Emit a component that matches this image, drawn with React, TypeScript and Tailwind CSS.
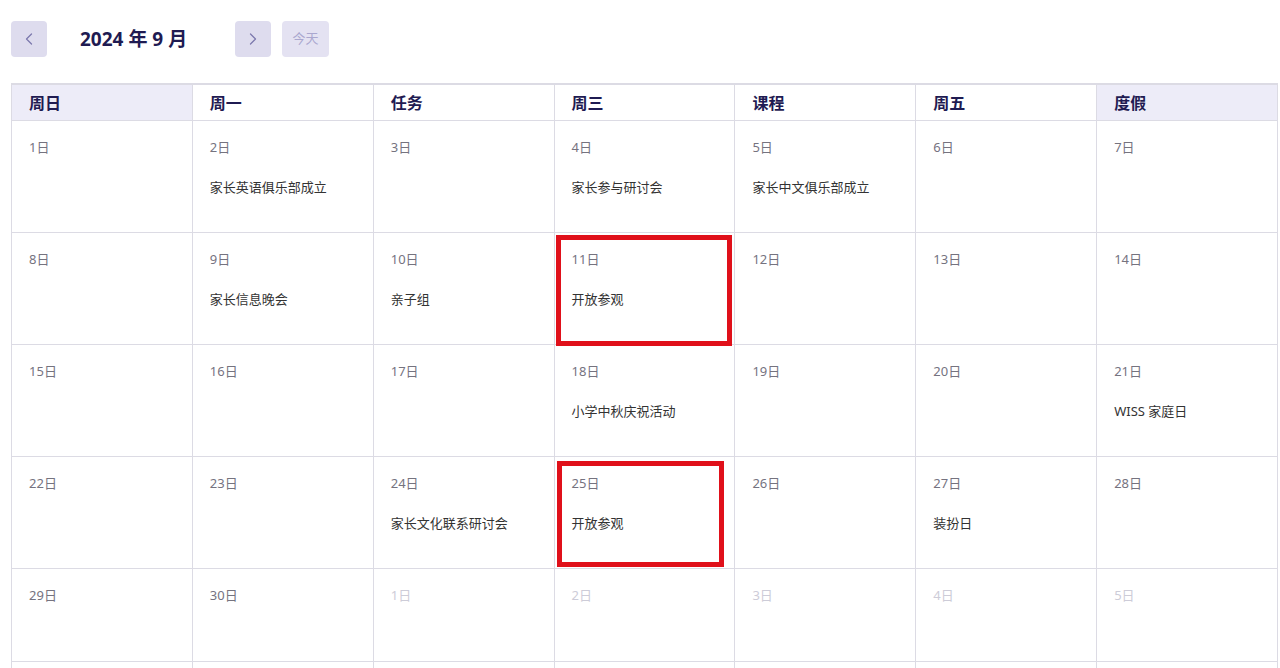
import { ChevronLeft, ChevronRight } from "lucide-react"

type Day = { n: number; event?: string; muted?: boolean; hidden?: boolean; mark?: "a" | "b" }

const headers = [
  { label: "周日", shaded: true },
  { label: "周一" },
  { label: "任务" },
  { label: "周三" },
  { label: "课程" },
  { label: "周五" },
  { label: "度假", shaded: true },
]

const weeks: Day[][] = [
  [
    { n: 1 },
    { n: 2, event: "家长英语俱乐部成立" },
    { n: 3 },
    { n: 4, event: "家长参与研讨会" },
    { n: 5, event: "家长中文俱乐部成立" },
    { n: 6 },
    { n: 7 },
  ],
  [
    { n: 8 },
    { n: 9, event: "家长信息晚会" },
    { n: 10, event: "亲子组" },
    { n: 11, event: "开放参观", mark: "a" },
    { n: 12 },
    { n: 13 },
    { n: 14 },
  ],
  [
    { n: 15 },
    { n: 16 },
    { n: 17 },
    { n: 18, event: "小学中秋庆祝活动" },
    { n: 19 },
    { n: 20 },
    { n: 21, event: "WISS 家庭日" },
  ],
  [
    { n: 22 },
    { n: 23 },
    { n: 24, event: "家长文化联系研讨会" },
    { n: 25, event: "开放参观", mark: "b" },
    { n: 26 },
    { n: 27, event: "装扮日" },
    { n: 28 },
  ],
  [
    { n: 29 },
    { n: 30 },
    { n: 1, muted: true },
    { n: 2, muted: true },
    { n: 3, muted: true },
    { n: 4, muted: true },
    { n: 5, muted: true },
  ],
  // next week starts below the visible area
  [6, 7, 8, 9, 10, 11, 12].map((n) => ({ n, muted: true, hidden: true })),
]

export default function App() {
  return (
    <div
      className="h-screen bg-white overflow-hidden"
      style={{ fontFamily: '"Noto Sans", "Noto Sans CJK SC", sans-serif' }}
    >
      {/* Toolbar */}
      <div className="flex items-center pl-[11px] pt-[21px] h-[57px]">
        <button className="flex h-9 w-9 items-center justify-center rounded-[4px] bg-[#dedcee] text-[#7c78ad]">
          <ChevronLeft size={20} strokeWidth={1.5} />
        </button>
        <div className="w-[188px] pl-[33px] text-[19px] font-bold text-[#1f1b52]">2024 年 9 月</div>
        <button className="flex h-9 w-9 items-center justify-center rounded-[4px] bg-[#dedcee] text-[#7c78ad]">
          <ChevronRight size={20} strokeWidth={1.5} />
        </button>
        <button className="ml-[11px] flex h-9 w-[47px] items-center justify-center rounded-[4px] bg-[#e4e2f2] text-[13px] text-[#aaa7cf]">
          今天
        </button>
      </div>

      {/* Calendar */}
      <div className="ml-[11px] mt-[26px] w-[1267px] border-r border-[#dcdbe4]">
        <div className="grid grid-cols-7 border-t-2 border-[#dcdbe4]">
          {headers.map((h) => (
            <div
              key={h.label}
              className={`h-[36px] border-l border-b border-[#dcdbe4] pl-[17px] flex items-center text-[16px] font-bold text-[#1f1b52] ${
                h.shaded ? "bg-[#edecf8]" : "bg-white"
              }`}
            >
              {h.label}
            </div>
          ))}
        </div>
        {weeks.map((week, wi) => {
          const hasEvent = week.some((d) => d.event)
          return (
            <div key={wi} className="grid grid-cols-7">
              {week.map((d, di) => (
                <div
                  key={di}
                  className={`relative border-l border-b border-[#dcdbe4] pl-[17px] pt-[16px] ${
                    hasEvent ? "h-[112px]" : "h-[93px]"
                  }`}
                >
                  {!d.hidden && (
                    <div
                      className={`text-[13px] leading-5 ${d.muted ? "text-[#cdccd8]" : "text-[#75737f]"}`}
                    >
                      {d.n}日
                    </div>
                  )}
                  {d.event && (
                    <div className="mt-5 text-[13px] leading-5 text-[#333333]">{d.event}</div>
                  )}
                  {d.mark === "a" && (
                    <div className="absolute left-px top-[2px] h-[111px] w-[176px] border-[5px] border-[#e0101a]" />
                  )}
                  {d.mark === "b" && (
                    <div className="absolute left-[2px] top-[4px] h-[106px] w-[167px] border-[5px] border-[#e0101a]" />
                  )}
                </div>
              ))}
            </div>
          )
        })}
      </div>
    </div>
  )
}
